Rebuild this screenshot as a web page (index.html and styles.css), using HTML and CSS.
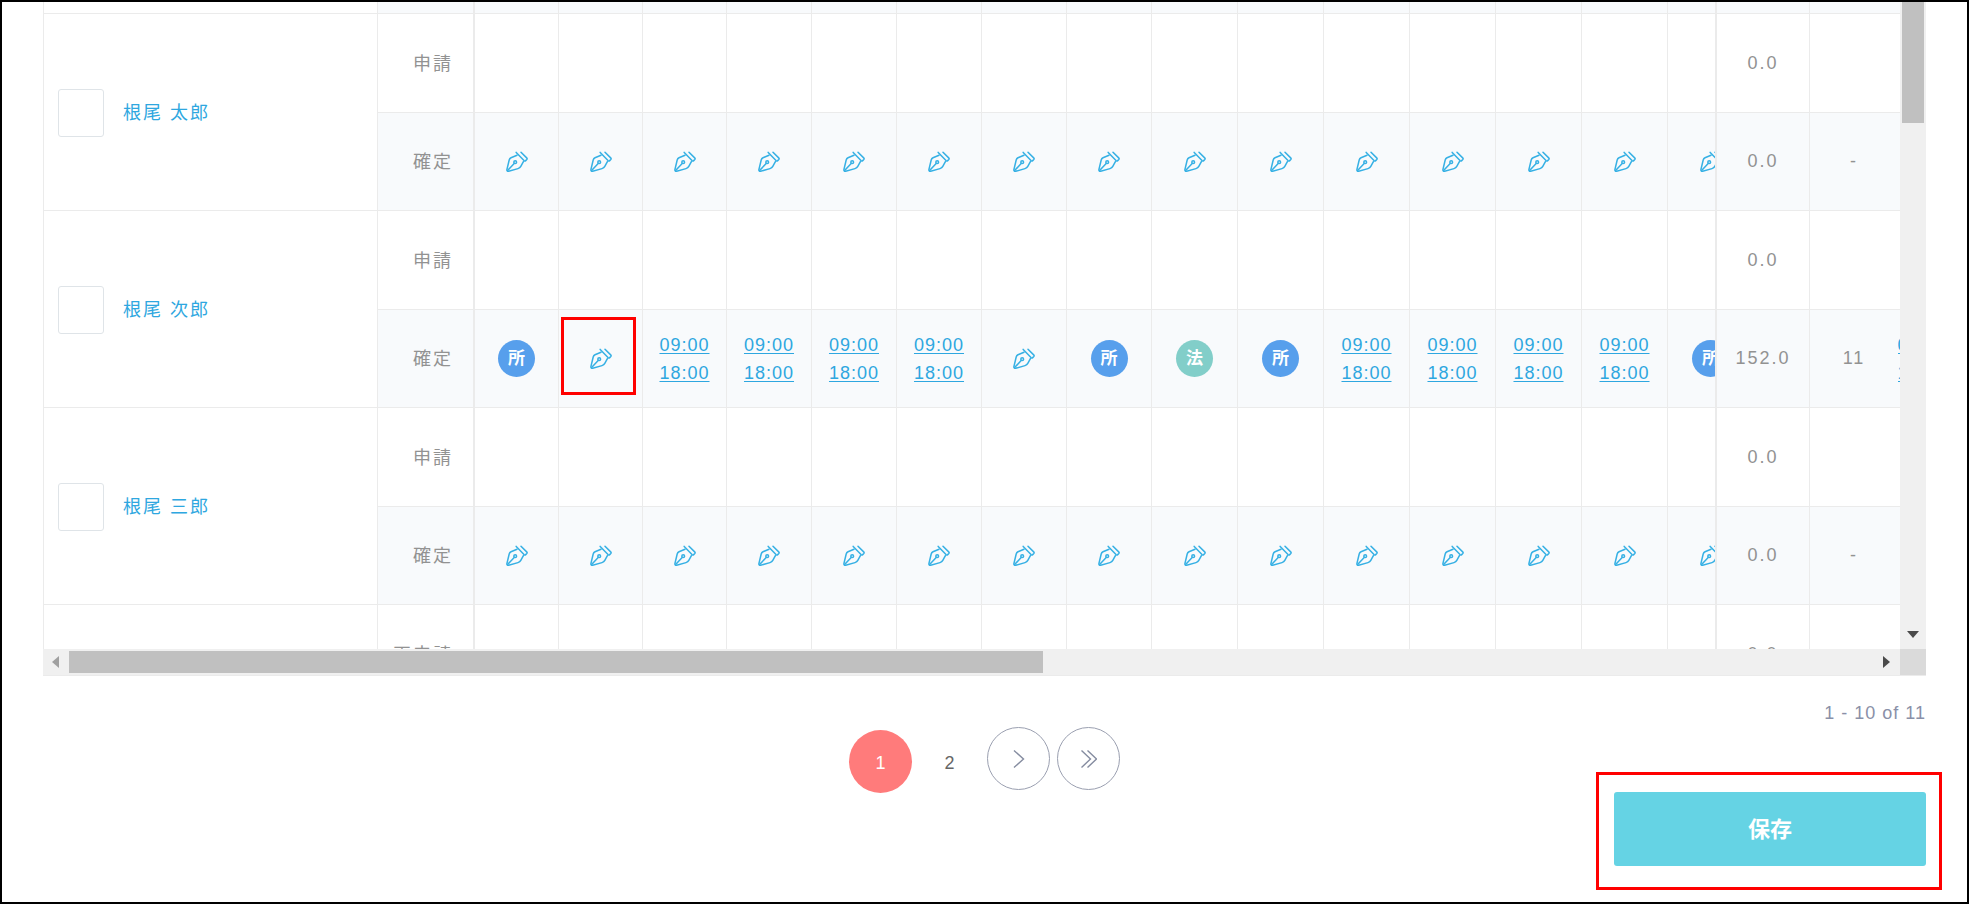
FILE: index.html
```html
<!DOCTYPE html>
<html lang="ja">
<head>
    <meta charset="UTF-8">
    <meta name="viewport" content="width=device-width, initial-scale=1.0">
    <title>シフト一覧</title>
    <link rel="stylesheet" href="styles.css">
</head>
<body>
    <svg class="sprite" aria-hidden="true">
        <symbol id="pen" viewBox="0 0 22 22">
            <path d="M11 4.2 L5 6.8 Q3.6 7.4 3.2 9 L0.9 18.6 Q0.7 20.4 2.6 20.3 L12 17.6 Q14 17 14.8 15.4 L17.4 10.6"/>
            <path d="M1.6 19.6 L8.2 12.4"/>
            <circle cx="9.2" cy="11.2" r="1.4"/>
            <path d="M10.2 1.4 L18 9.6 Q18.9 10.4 19.7 9.6 L20.8 8.5 Q21.5 7.7 20.7 6.9 L15 1.2"/>
        </symbol>
    </svg>
    <main>
        <section class="sheet">
            <div class="sheet-view">
                <table>
                    <colgroup>
                        <col class="col-name">
                        <col class="col-label">
                        <col class="col-day-s" span="3">
                        <col class="col-day-m" span="5">
                        <col class="col-day-l" span="7">
                        <col class="col-blank">
                        <col class="col-day-l">
                        <col class="col-hours">
                        <col class="col-days">
                    </colgroup>
                    <tbody id="shift-list"></tbody>
                </table>
            </div>
            <div class="bar-v">
                <div class="thumb-v"></div>
                <svg class="arrow" width="12" height="7" viewBox="0 0 12 7"><path d="M0 0H12L6 7Z"/></svg>
            </div>
            <div class="bar-h">
                <svg class="arrow arrow-off" width="7" height="12" viewBox="0 0 7 12"><path d="M7 0V12L0 6Z"/></svg>
                <div class="track"><div class="thumb-h"></div></div>
                <svg class="arrow" width="7" height="12" viewBox="0 0 7 12"><path d="M0 0V12L7 6Z"/></svg>
            </div>
            <div class="corner"></div>
        </section>
        <footer>
            <p class="total">1 - 10 of 11</p>
            <nav class="pager">
                <a class="page current" href="#">1</a>
                <a class="page" href="#">2</a>
                <a class="step" href="#" aria-label="次へ">
                    <svg width="16" height="20" viewBox="0 0 16 20"><path d="M3 1.5L12.5 10L3 18.5"/></svg>
                </a>
                <a class="step" href="#" aria-label="最後へ">
                    <svg width="16" height="20" viewBox="0 0 16 20"><path d="M0.5 1.5L9.5 10L0.5 18.5M6.5 1.5L15.5 10L6.5 18.5"/></svg>
                </a>
            </nav>
            <div class="save-area">
                <button class="save" type="button">保存</button>
            </div>
        </footer>
    </main>
    <script>
        // p: 未入力, s: 所定休日, h: 法定休日, t: 勤務時間
        const pen = '<a class="pen" href="#" aria-label="入力"><svg width="22" height="22"><use href="#pen"/></svg></a>';
        const cells = {
            p: pen,
            f: pen + '<span class="focus-box"></span>',
            s: '<span class="badge">所</span>',
            h: '<span class="badge legal">法</span>',
            t: '<a class="time" href="#">09:00</a><a class="time" href="#">18:00</a>',
            '-': ''
        };
        const members = [
            { name: '根尾 太郎', days: 'ppppppppppppppp-p', hours: '0.0', count: '-' },
            { name: '根尾 次郎', days: 'sfttttpshstttts-t', hours: '152.0', count: '11' },
            { name: '根尾 三郎', days: 'ppppppppppppppp-p', hours: '0.0', count: '-' }
        ];
        const empty = '-'.repeat(17);

        function row(cls, head, label, days, hours, count) {
            const tds = [...days].map(d => `<td>${cells[d]}</td>`).join('');
            return `<tr class="${cls}">${head}<td class="label">${label}</td>${tds}` +
                `<td class="hours">${hours}</td><td class="days">${count}</td></tr>`;
        }

        let html = row('fixed cut', '<td class="name"></td>', '', empty, '', '');
        members.forEach((m, i) => {
            const head = `<td class="name" rowspan="2"><div class="member">
                <input type="checkbox" id="member${i}" aria-labelledby="name${i}">
                <a id="name${i}" href="#">${m.name}</a></div></td>`;
            html += row('request', head, '申請', empty, '0.0', '');
            html += row('fixed', '', '確定', m.days, m.hours, m.count);
        });
        html += row('request', '<td class="name"></td>', '再申請', empty, '0.0', '');
        document.getElementById('shift-list').innerHTML = html;
    </script>
</body>
</html>
```
FILE: styles.css
```css
/* Base */
* {
    box-sizing: border-box;
}

body {
    margin: 0;
    background-color: #fff;
    color: #929292;
    font-family: "Liberation Sans", "Noto Sans CJK JP", sans-serif;
    font-size: 18px;
    letter-spacing: 2px;
}

a {
    color: #2ea7e0;
    text-decoration: none;
}

.sprite {
    display: none;
}

main {
    display: flex;
    flex-direction: column;
    height: 100vh;
    border: 2px solid #000;
}

/* Shift table */
.sheet {
    flex: 1 1 0;
    min-height: 0;
    margin: 0 41px;
    display: grid;
    grid-template-columns: 1fr 26px;
    grid-template-rows: minmax(0, 1fr) 26px;
    border-bottom: 1px solid #ebebeb;
}

.sheet-view {
    min-width: 0;
    overflow: hidden;
}

table {
    table-layout: fixed;
    width: 100%;
    border-collapse: separate;
    border-spacing: 0;
}

.col-name { width: 335px; }
.col-label { width: 97px; }
.col-day-s { width: 84px; }
.col-day-m { width: 85px; }
.col-day-l { width: 86px; }
.col-blank { width: 126px; }
.col-hours { width: 95px; }
.col-days { width: 88px; }

td {
    position: relative;
    padding: 0;
    border-right: 1px solid #ebebeb;
    border-bottom: 1px solid #ebebeb;
    text-align: center;
    vertical-align: middle;
}

.request td {
    height: 99px;
    background-color: #fff;
}

.fixed td {
    height: 98px;
    background-color: #f8fafc;
}

.cut td {
    height: 12px;
}

.request .name,
.fixed .name {
    border-left: 1px solid #ebebeb;
    background-color: #fff;
}

td.label {
    padding: 0 20px 3px 0;
    border-right-width: 2px;
    text-align: right;
    white-space: nowrap;
}

td.hours {
    position: sticky;
    right: 90px;
    z-index: 1;
    border-left: 2px solid #ebebeb;
}

td.days {
    position: sticky;
    right: 2px;
    z-index: 1;
    border-right: none;
}

.member {
    display: flex;
    align-items: center;
    gap: 19px;
    padding: 2px 0 0 14px;
}

.member a {
    padding-bottom: 4px;
}

.member input {
    appearance: none;
    width: 46px;
    height: 48px;
    margin: 0;
    border: 1px solid #dfe4e8;
    border-radius: 3px;
    background-color: #fff;
}

.pen {
    display: block;
    width: 22px;
    height: 22px;
    margin: 0 auto;
}

.pen svg {
    display: block;
    fill: none;
    stroke: #36b0e4;
    stroke-width: 1.5;
    stroke-linecap: round;
    stroke-linejoin: round;
}

.time {
    display: block;
    width: max-content;
    margin: 0 auto;
    letter-spacing: 1px;
    line-height: 28px;
    text-decoration: underline;
    text-underline-offset: 2px;
}

.badge {
    display: inline-block;
    width: 37px;
    height: 37px;
    border-radius: 50%;
    background-color: #579fec;
    color: #fff;
    font-size: 17px;
    font-weight: bold;
    letter-spacing: 0;
    line-height: 37px;
    vertical-align: middle;
}

.legal {
    background-color: #82cec9;
}

.focus-box {
    position: absolute;
    top: 7px;
    left: 2px;
    width: 75px;
    height: 78px;
    border: 3px solid #f00;
}

/* Scroll bars */
.bar-v {
    display: flex;
    flex-direction: column;
    align-items: center;
    justify-content: space-between;
    padding-bottom: 11px;
    background-color: #f0f0f0;
}

.thumb-v {
    width: 22px;
    height: 19%;
    background-color: #c0c0c0;
}

.bar-h {
    display: flex;
    align-items: center;
    gap: 10px;
    padding: 0 10px 0 9px;
    background-color: #f0f0f0;
}

.track {
    flex: 1;
}

.thumb-h {
    width: 54%;
    height: 22px;
    background-color: #c0c0c0;
}

.arrow {
    fill: #4a4a4a;
}

.arrow-off {
    fill: #a0a0a0;
}

.corner {
    background-color: #dadada;
}

/* Pager and save */
footer {
    display: grid;
    grid-template-columns: 1fr auto 1fr;
    align-items: start;
    padding: 23px 41px 12px;
}

.total {
    grid-column: 1 / -1;
    margin: 0;
    color: #8a90a8;
    letter-spacing: 1px;
    line-height: 28px;
    text-align: right;
}

.pager {
    grid-column: 2;
    display: flex;
    gap: 7px;
    letter-spacing: 0;
}

.page {
    width: 61px;
    height: 63px;
    margin-top: 3px;
    color: #666;
    line-height: 66px;
    text-align: center;
}

.current {
    width: 63px;
    border-radius: 50%;
    background-color: #ff7b7b;
    color: #fff;
}

.step {
    display: flex;
    align-items: center;
    justify-content: center;
    width: 63px;
    height: 63px;
    border: 1px solid #9a9fb0;
    border-radius: 50%;
}

.step svg {
    fill: none;
    stroke: #858ca0;
    stroke-width: 1.4;
}

.save-area {
    justify-self: end;
    width: 346px;
    margin: 45px -16px 0 0;
    padding: 17px 13px 21px 15px;
    border: 3px solid #f00;
}

.save {
    display: block;
    width: 100%;
    height: 74px;
    padding: 0 0 4px;
    border: none;
    border-radius: 3px;
    background-color: #65d3e4;
    color: #fff;
    font-family: inherit;
    font-size: 22px;
    font-weight: bold;
}
```
